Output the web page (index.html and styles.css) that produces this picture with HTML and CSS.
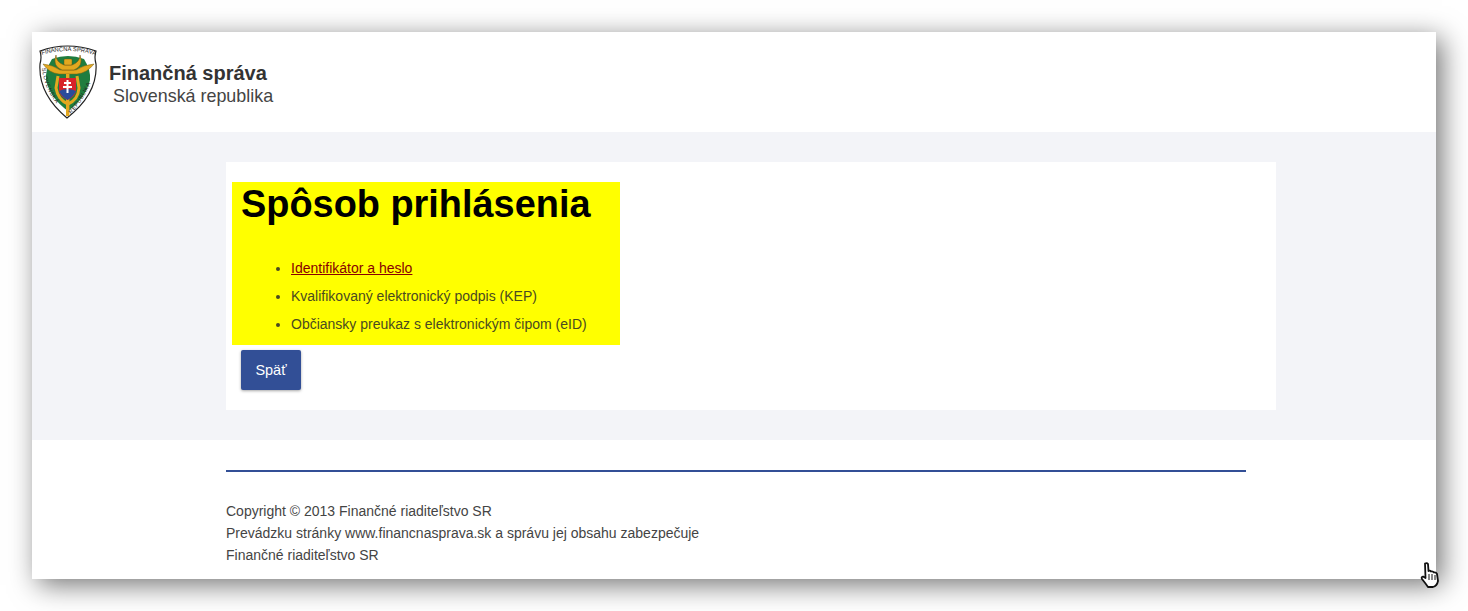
FILE: index.html
```html
<!DOCTYPE html>
<html lang="sk">
<head>
<meta charset="utf-8">
<title>Spôsob prihlásenia</title>
<link rel="stylesheet" href="styles.css">
</head>
<body>
<div class="window">
  <header class="header">
    <svg class="logo" viewBox="0 0 58 75" width="58" height="75" aria-hidden="true">
      <path d="M1 7 Q28 -3 57 7 Q55 13 57 20 Q59 50 28 74 Q-1 50 1 20 Q3 13 1 7Z" fill="#fff" stroke="#222" stroke-width="1.200"/>
      <path d="M13 15 Q29 9 45 15 Q52 26 51 36 Q47 54 29 67 Q11 54 7 36 Q6 26 13 15Z" fill="#1f7d3f"/>
      <path d="M4 20 Q14 21 21 26 L37 26 Q44 21 55 20 Q48 29 38 30 L20 30 Q10 29 4 20Z" fill="#e3a81f" stroke="#7d6214" stroke-width=".5"/>
      <path d="M17 11 Q13 22 23 26 L35 26 Q45 22 41 11 Q41 18 33 21 L25 21 Q17 18 17 11Z" fill="#e3a81f" stroke="#5f4b10" stroke-width=".5"/>
      <rect x="25" y="15" width="8" height="6" rx="1" fill="#e3a81f" stroke="#5f4b10" stroke-width=".4"/>
      <path d="M19 32 L17 44 Q19 56 29 60 Q39 56 40 44 L38 32" fill="none" stroke="#e3a81f" stroke-width="3"/>
      <rect x="27" y="30" width="3.400" height="42" fill="#e3a81f"/>
      <path d="M20 34 H37 V46 Q37 52 28.500 56 Q20 52 20 46Z" fill="#d8232a"/>
      <path d="M20 47 Q28 43 37 47 Q35 52 28.500 56 Q22 52 20 47Z" fill="#2b4c9b"/>
      <path d="M27.500 36 H29.500 V38 H32 V40 H29.500 V42 H33 V44 H29.500 V49 H27.500 V44 H24 V42 H27.500 V40 H25 V38 H27.500Z" fill="#fff"/>
      <path id="logoArc" d="M3 11 Q28 3 56 11" fill="none"/>
      <path id="logoLeft" d="M3 24 Q5 48 26 70" fill="none"/>
      <path id="logoRight" d="M32 70 Q52 48 55 24" fill="none"/>
      <text class="logo-text"><textPath href="#logoArc">FINANČNÁ SPRÁVA</textPath></text>
      <text class="logo-side"><textPath href="#logoLeft">SLOVENSKÁ</textPath></text>
      <text class="logo-side"><textPath href="#logoRight">REPUBLIKA</textPath></text>
    </svg>
    <div class="brand">
      <div class="brand-name">Finančná správa</div>
      <div class="brand-sub">Slovenská republika</div>
    </div>
  </header>
  <main class="content">
    <section class="card">
      <div class="highlight">
        <h1>Spôsob prihlásenia</h1>
        <ul class="methods">
          <li><a href="#">Identifikátor a heslo</a></li>
          <li>Kvalifikovaný elektronický podpis (KEP)</li>
          <li>Občiansky preukaz s elektronickým čipom (eID)</li>
        </ul>
      </div>
      <button class="btn" type="button">Späť</button>
    </section>
  </main>
  <footer class="footer">
    <div class="footer-inner">
      <p>Copyright © 2013 Finančné riaditeľstvo SR</p>
      <p>Prevádzku stránky www.financnasprava.sk a správu jej obsahu zabezpečuje</p>
      <p>Finančné riaditeľstvo SR</p>
    </div>
  </footer>
</div>
<svg class="cursor" viewBox="0 0 20 26" width="20" height="26" aria-hidden="true">
  <path d="M5 1.500 Q7 .5 8 2 L8.500 9 Q10 8 11 9.500 Q13 9 14 10.500 Q16 10 17 12 L18 19 Q17 24 13 25 L8 25 Q6 22 2 17 Q1 15 3 14.500 L5.500 16Z" fill="#fff" stroke="#111" stroke-width="1.800" stroke-linejoin="round"/>
  <path d="M9 12 V18 M12 12 V18 M15 13 V18" stroke="#111" stroke-width="1"/>
</svg>
</body>
</html>
```

FILE: styles.css
```css
* { box-sizing: border-box; }

html, body { margin: 0; background: #fff; }
body {
  height: 611px;
  padding: 32px;
  overflow: hidden;
  position: relative;
  font-family: "Liberation Sans", Arial, sans-serif;
  color: #444;
}

.window {
  width: 1404px;
  height: 547px;
  background: #fff;
  box-shadow: 6px 6px 26px rgba(0, 0, 0, 0.55);
}

.header {
  height: 100px;
  display: flex;
  padding: 12px 0 0 7px;
}
.logo { flex: none; }
.logo-text { font-size: 5.800px; font-family: "Liberation Sans", sans-serif; fill: #222; }
.logo-side { font-size: 5.600px; font-family: "Liberation Sans", sans-serif; fill: #222; letter-spacing: .6px; }

.brand { padding: 18px 0 0 12px; }
.brand-name { font-size: 20px; font-weight: bold; line-height: 23px; color: #333; }
.brand-sub { font-size: 17.900px; line-height: 23px; padding-left: 4px; }

.content {
  height: 308px;
  background: #f3f4f8;
  padding: 30px 160px 30px 194px;
}
.card {
  height: 248px;
  background: #fff;
  padding: 20px 6px;
}

.highlight {
  width: 388px;
  height: 163px;
  background: #ff0;
  padding: 0 9px;
}
h1 {
  margin: 0;
  font-size: 37.900px;
  line-height: 45px;
  color: #000;
}
.methods {
  margin: 0;
  padding: 27px 0 0 50px;
  font-size: 14px;
  line-height: 28px;
  color: #4a4a20;
}
.methods a { color: #800; }

.btn {
  display: block;
  width: 60px;
  height: 40px;
  margin: 5px 0 0 9px;
  border: 0;
  border-radius: 2px;
  background: #324f96;
  color: #fff;
  font: 14.500px "Liberation Sans", Arial, sans-serif;
  box-shadow: 0 1px 3px rgba(0, 0, 0, 0.35);
}

.footer { padding: 30px 0 0 194px; }
.footer-inner {
  width: 1020px;
  border-top: 2px solid #324f96;
  padding-top: 28px;
  font-size: 14px;
  line-height: 22px;
}
.footer p { margin: 0; }

.cursor { position: absolute; left: 1420px; top: 562px; }
```
